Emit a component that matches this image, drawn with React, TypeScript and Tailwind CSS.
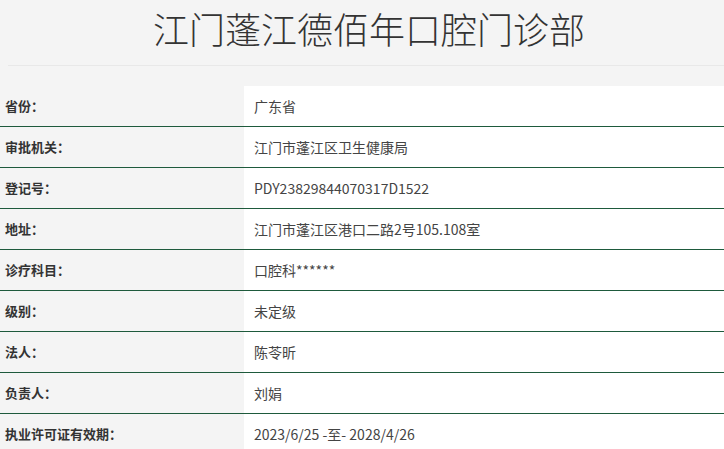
const rows: [string, string][] = [
  ['省份：', '广东省'],
  ['审批机关：', '江门市蓬江区卫生健康局'],
  ['登记号：', 'PDY23829844070317D1522'],
  ['地址：', '江门市蓬江区港口二路2号105.108室'],
  ['诊疗科目：', '口腔科******'],
  ['级别：', '未定级'],
  ['法人：', '陈苓昕'],
  ['负责人：', '刘娟'],
  ['执业许可证有效期：', '2023/6/25 -至- 2028/4/26'],
]

export default function App() {
  return (
    <div
      className="min-h-screen bg-[#f4f4f4] text-[#333]"
      style={{ fontFamily: '"Noto Sans CJK SC", "Noto Sans", sans-serif' }}
    >
      {/* Title */}
      <div className="ml-2 border-b border-[#e8e8e8] pt-[6px] pb-[15px]">
        <h1 className="pl-[6px] text-center text-[36px] leading-[44px] font-light text-[#333]">
          江门蓬江德佰年口腔门诊部
        </h1>
      </div>

      {/* Info table */}
      <div className="mt-5">
        {rows.map(([label, value]) => (
          <div key={label} className="flex h-[41px] border-b border-[#1e5a3c]">
            <div className="flex w-[244px] shrink-0 items-center pl-[5px] text-[13px] font-bold text-[#333]">
              {label}
            </div>
            <div className="flex flex-1 items-center bg-white pl-[10px] text-[14px] text-[#444]">
              {value}
            </div>
          </div>
        ))}
      </div>
    </div>
  )
}
